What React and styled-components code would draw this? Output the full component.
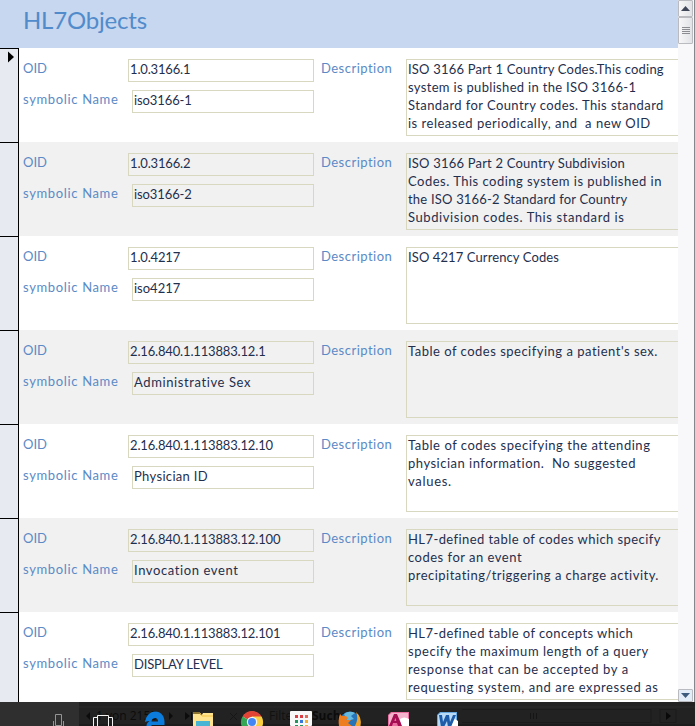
import React from "react";
import styled, { createGlobalStyle } from "styled-components";

const GlobalStyle = createGlobalStyle`
  * { box-sizing: border-box; }
  body {
    margin: 0;
    overflow: hidden;
    background: #fff;
    font-family: Lato, "Liberation Sans", sans-serif;
    font-variant-ligatures: none;
  }
`;

const Screen = styled.div`
  width: 695px;
  height: 726px;
  display: flex;
  flex-direction: column;
  overflow: hidden;
`;

const Workspace = styled.div`
  height: 702px;
  display: flex;
  overflow: hidden;
`;

const FormView = styled.main`
  width: 678px;
  height: 702px;
  overflow: hidden;
`;

const FormHeader = styled.header`
  height: 48px;
  padding: 5px 0 0 23px;
  background: #c6d7ef;
`;

const Title = styled.h1`
  margin: 0;
  font-size: 24px;
  line-height: 30px;
  font-weight: 400;
  letter-spacing: -0.2px;
  color: #528bcb;
`;

const Record = styled.section`
  height: 94px;
  display: flex;
  background: ${(p) => (p.$shaded ? "#f1f1f1" : "#fff")};
`;

const Selector = styled.div`
  width: 19px;
  padding: 2px 0 0 8px;
  border-top: 1px solid #000;
  border-right: 1px solid #000;
  background: #e7ebf1;
  svg { display: block; }
`;

const Fields = styled.div`
  width: 295px;
  padding: 11px 0 0 4px;
`;

const FieldRow = styled.div`
  display: flex;
  justify-content: space-between;
  height: 23px;
  margin-bottom: 8px;
`;

const Label = styled.span`
  display: block;
  font-size: 13px;
  line-height: 19px;
  letter-spacing: ${(p) => p.$track || 0}px;
  white-space: nowrap;
  color: #5b8ac6;
`;

const Input = styled.div`
  width: ${(p) => p.$width}px;
  height: 23px;
  padding: 0 0 0 1px;
  border: 1px solid #d8d7c0;
  font-size: 13px;
  line-height: 18px;
  letter-spacing: ${(p) => p.$track || 0}px;
  white-space: nowrap;
  color: #1f2f4d;
`;

const DescriptionLabel = styled.div`
  width: 92px;
  padding: 11px 0 0 7px;
`;

const Memo = styled.div`
  width: 272px;
  height: 77px;
  margin-top: 11px;
  padding: 0 0 0 1px;
  border: 1px solid #d8d7c0;
  border-right: 0;
  overflow: hidden;
`;

const Line = styled.div`
  height: 18px;
  font-size: 13px;
  line-height: 18px;
  letter-spacing: ${(p) => p.$track || 0}px;
  white-space: pre;
  color: #1f2f4d;
`;

const Scrollbar = styled.aside`
  width: 17px;
  display: flex;
  flex-direction: column;
  align-items: flex-start;
  background: #f8f8fa;
  border-right: 1px solid #85878d;
`;

const ScrollButton = styled.div`
  width: 15px;
  height: ${(p) => p.$height}px;
  display: flex;
  align-items: center;
  justify-content: center;
  border: 1px solid #b9bbc0;
  border-radius: 1px;
  background: ${(p) => (p.$cool ? "#e3edf7" : "linear-gradient(90deg, #f7f7f8, #e2e3e7)")};
`;

const ScrollTrack = styled.div`
  flex: 1;
`;

const Taskbar = styled.footer`
  height: 24px;
  display: flex;
  background: #2f2f2f;
  svg { display: block; }
`;

const records = [
  ["1.0.3166.1", "iso3166-1", -0.1, [
    ["ISO 3166 Part 1 Country Codes.This coding", 0.2],
    ["system is published in the ISO 3166-1", 0.32],
    ["Standard for Country codes. This standard", 0.42],
    ["is released periodically, and  a new OID", 0.5],
  ]],
  ["1.0.3166.2", "iso3166-2", -0.1, [
    ["ISO 3166 Part 2 Country Subdivision", 0.2],
    ["Codes. This coding system is published in", 0.49],
    ["the ISO 3166-2 Standard for Country", 0.2],
    ["Subdivision codes. This standard is", 0.58],
  ]],
  ["1.0.4217", "iso4217", 0, [["ISO 4217 Currency Codes", 0.1]]],
  ["2.16.840.1.113883.12.1", "Administrative Sex", 0.6, [
    ["Table of codes specifying a patient's sex.", 0.5],
  ]],
  ["2.16.840.1.113883.12.10", "Physician ID", 0.33, [
    ["Table of codes specifying the attending", 0.53],
    ["physician information.  No suggested", 0.5],
    ["values.", 0.7],
  ]],
  ["2.16.840.1.113883.12.100", "Invocation event", 0.6, [
    ["HL7-defined table of codes which specify", 0.42],
    ["codes for an event", 0.5],
    ["precipitating/triggering a charge activity.", 0.48],
  ]],
  ["2.16.840.1.113883.12.101", "DISPLAY LEVEL", -0.2, [
    ["HL7-defined table of concepts which", 0.43],
    ["specify the maximum length of a query", 0.54],
    ["response that can be accepted by a", 0.62],
    ["requesting system, and are expressed as", 0.58],
  ]],
];

function RecordRow({ record, index }) {
  const [oid, name, nameTrack, lines] = record;
  return (
    <Record $shaded={index % 2 === 1}>
      <Selector>
        {index === 0 && (
          <svg width="7" height="12"><path d="M0 .5V11.5L6 6Z" fill="#000" /></svg>
        )}
      </Selector>
      <Fields>
        <FieldRow>
          <Label>OID</Label>
          <Input $width={186} $track={-0.16}>{oid}</Input>
        </FieldRow>
        <FieldRow>
          <Label $track={0.65}>symbolic Name</Label>
          <Input $width={182} $track={nameTrack}>{name}</Input>
        </FieldRow>
      </Fields>
      <DescriptionLabel><Label $track={0.48}>Description</Label></DescriptionLabel>
      <Memo>
        {lines.map(([text, track]) => <Line key={text} $track={track}>{text}</Line>)}
      </Memo>
    </Record>
  );
}

function TaskbarArt() {
  return (
    <svg width="695" height="24" fontFamily="Open Sans, sans-serif" fontSize="12">
      <rect x="79" width="616" height="24" fill="#222" />
      <path d="M79 5H695" stroke="#2b2b2b" />
      <path d="M79 23H695" stroke="#161616" />
      <text x="96" y="18" fill="#0c0c0c">1 von 2155</text>
      <path d="M90 10v8l-4-4zM169 10v8l4-4zM185 10v8l5-4zM191 10h1v8h-1z" fill="#0c0c0c" />
      <text x="269" y="18" fill="#111">Filter</text>
      <text x="312" y="18" fill="#0b0b0b" fontWeight="700">Suchen</text>
      <path d="M230 11l7 7m0-7l-7 7" stroke="#161616" />
      <g fill="none" stroke="#949494">
        <path d="M55.5 12.5h6v11h-6zM53.5 19v5M63.5 19v5" />
      </g>
      <g fill="none" stroke="#f4f4f4">
        <path d="M97.5 24V13.5H108.500V24M97 15.500H93.500V24M109 15.500H112.500V24" />
      </g>
      <path d="M145 20c1-6 5-10.500 10-10.500 6 0 9.500 4.500 9.500 10.500v3h-13v1h-5c0-2 1-3.500 3-5-1.500 0-3 .5-4.500 1zM151.500 19.500h6.500c0-2-1-3.500-3-3.500s-3.200 1.500-3.500 3.500z" fill="#0b7bdc" fillRule="evenodd" />
      <path d="M193 12v12h20V11h-10l-1.500 2.500-1.500-1.500z" fill="#ffe38e" />
      <path d="M193 11h7l2 3h11" fill="none" stroke="#f3c342" />
      <path d="M196 19h14v5h-14z" fill="#4ab4d5" />
      <g>
        <circle cx="252" cy="20" r="10.500" fill="#fff" />
        <path d="M252 20L242.500 14.500A11 11 0 0 1 261.500 14.500Z" fill="#e14435" />
        <path d="M242.500 14.500A11 11 0 0 0 247 30L252 20Z" fill="#35a654" />
        <path d="M252 14.500H261.500A11 11 0 0 1 254 31L252 20Z" fill="#f9cf3f" />
        <circle cx="252" cy="20" r="5.200" fill="#f4f5f5" />
        <circle cx="252" cy="20" r="4" fill="#4285f4" />
      </g>
      <rect x="290" y="9" width="22" height="15" rx="1" fill="#f7f8f7" />
      <path d="M295 13h3v3h-3z" fill="#dc3e45" />
      <path d="M300 13h3v3h-3z" fill="#dc3e45" />
      <path d="M305 13h3v3h-3z" fill="#e26b58" />
      <path d="M295 18h3v3h-3z" fill="#23945b" />
      <path d="M300 18h3v3h-3z" fill="#3578db" />
      <path d="M305 18h3v3h-3z" fill="#f0ae32" />
      <path d="M295 23h3v1h-3zM300 23h3v1h-3z" fill="#23945b" />
      <path d="M305 23h3v1h-3z" fill="#f0ae32" />
      <g>
        <circle cx="350" cy="20" r="10.500" fill="#2874b8" />
        <path d="M344 12q5-4 11-1l-4 3 3 3-7 2z" fill="#63b9df" />
        <path d="M340 12l2 2q4-1 6 2l-2 2h5l-3 3 4 3H339Q338 17 340 12Z" fill="#ee7d20" />
        <path d="M356 10q6 5 4.500 14H355q4-8 1-14Z" fill="#f4a426" />
      </g>
      <path d="M388 24V13l3-3h18v14z" fill="#e76e9f" />
      <path d="M389 24V13l3-2h16v6q-10 7-14-2z" fill="#f4b3cc" />
      <path d="M400 17q4-3 9 0v7h-8z" fill="#fff" />
      <path d="M389 24l5-12h3l5 12h-4l-1-3h-4l-1 3zM394.300 19h2l-1-3z" fill="#a50e52" fillRule="evenodd" />
      <path d="M437 24V13l3-3h17v14z" fill="#69a7df" />
      <path d="M438 24V13l3-2h15v13z" fill="#b9daf5" />
      <path d="M451 18q4-2 7 1v5h-8z" fill="#fff" />
      <path d="M439 13h3l1 7 3-7h3l1 7 3-7h3l-5 12h-3l-1-6-3 6h-3z" fill="#1e5ba9" />
      <path d="M462 7.500H651V20.500H462M660 7.500h16v13h-16z" fill="none" stroke="#1b1b1b" />
      <path d="M530.500 11v6M533.500 11v6M536.500 11v6" stroke="#151515" />
      <path d="M666 10v8l5-4z" fill="#090909" />
    </svg>
  );
}

export default function App() {
  return (
    <>
      <GlobalStyle />
      <Screen>
        <Workspace>
          <FormView>
            <FormHeader><Title>HL7Objects</Title></FormHeader>
            {records.map((record, index) => (
              <RecordRow key={record[0]} record={record} index={index} />
            ))}
          </FormView>
          <Scrollbar>
            <ScrollButton $height={17}>
              <svg width="9" height="5"><path d="M0 5L4.500 0L9 5Z" fill="#3f4658" /></svg>
            </ScrollButton>
            <ScrollButton $height={27}>
              <svg width="8" height="9"><path d="M0 1.500h8M0 3.500h8M0 5.500h8M0 7.500h8" stroke="#8b8d93" /></svg>
            </ScrollButton>
            <ScrollTrack />
            <ScrollButton $height={13} $cool>
              <svg width="9" height="5"><path d="M0 0H9L4.500 5Z" fill="#3d5b7c" /></svg>
            </ScrollButton>
          </Scrollbar>
        </Workspace>
        <Taskbar><TaskbarArt /></Taskbar>
      </Screen>
    </>
  );
}
